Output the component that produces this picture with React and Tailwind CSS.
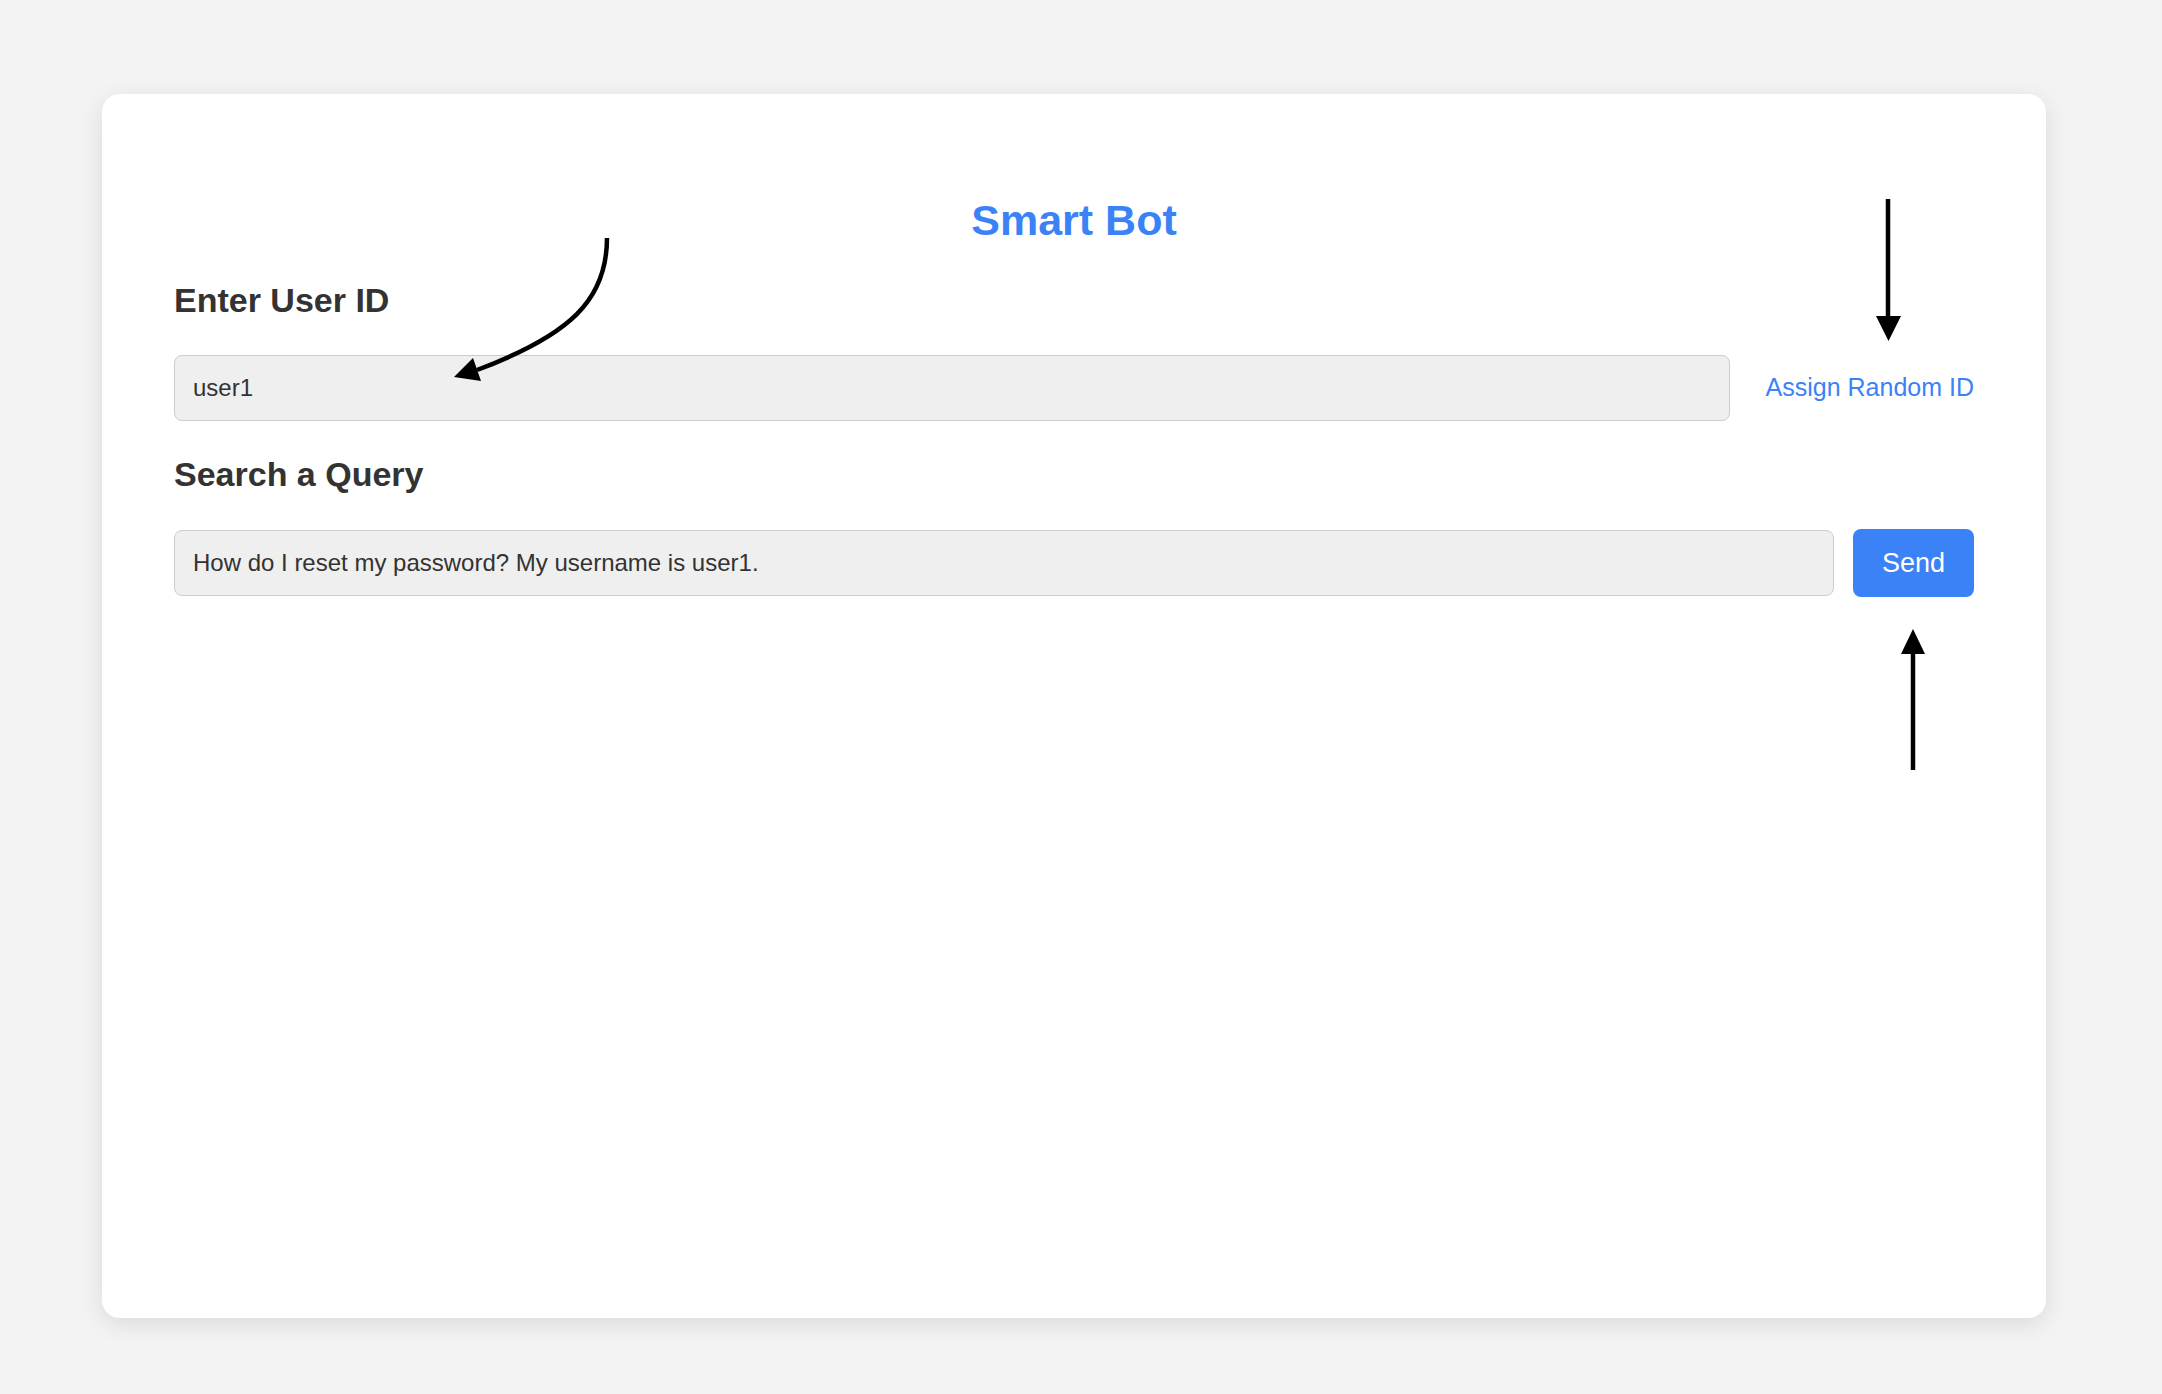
import { useState } from 'react';

export default function App() {
  const [userId, setUserId] = useState('user1');
  const [query, setQuery] = useState('How do I reset my password? My username is user1.');

  function assignRandom() {
    setUserId('user' + Math.floor(Math.random() * 1000));
  }

  return (
    <div
      className="min-h-[1394px] bg-[#f3f3f3] pl-[102px] pt-[94px]"
      style={{ fontFamily: '"Liberation Sans", Arial, sans-serif' }}
    >
      {/* ── CARD ───────────────────────────────── */}
      <div className="relative w-[1944px] h-[1224px] bg-white rounded-[18px] shadow-[0_6px_24px_rgba(0,0,0,0.1)] px-[72px] pt-[101px]">
        <h1 className="text-center text-[43px] leading-[50px] font-bold text-[#3b82f6] mb-[35px]">
          Smart Bot
        </h1>

        <h2 className="text-[34px] leading-[40px] font-bold text-[#333] mb-[35px]">
          Enter User ID
        </h2>
        <div className="flex items-center gap-[36px] mb-[33px]">
          <input
            value={userId}
            onChange={(e) => setUserId(e.target.value)}
            className="flex-1 h-[66px] bg-[#efefef] border border-[#cccccc] rounded-[8px] pl-[18px] text-[24px] text-[#333] outline-none"
          />
          <button
            onClick={assignRandom}
            className="text-[25px] text-[#3b82f6] whitespace-nowrap cursor-pointer"
          >
            Assign Random ID
          </button>
        </div>

        <h2 className="text-[34px] leading-[40px] font-bold text-[#333] mb-[35px]">
          Search a Query
        </h2>
        <div className="flex items-center gap-[19px]">
          <input
            value={query}
            onChange={(e) => setQuery(e.target.value)}
            className="flex-1 h-[66px] bg-[#efefef] border border-[#cccccc] rounded-[8px] pl-[18px] text-[24px] text-[#333] outline-none"
          />
          <button className="w-[121px] h-[68px] bg-[#3b82f6] rounded-[8px] text-white text-[27px] cursor-pointer">
            Send
          </button>
        </div>

        {/* annotation arrows */}
        <svg
          className="absolute inset-0 pointer-events-none"
          width="1944"
          height="1224"
          viewBox="0 0 1944 1224"
        >
          <path d="M505 144 C505 206 468 241 375 276" fill="none" stroke="#000" strokeWidth="4.5" />
          <polygon points="352,283 371,264 379,287" fill="#000" />

          <line x1="1786" y1="105" x2="1786" y2="226" stroke="#000" strokeWidth="4.5" />
          <polygon points="1774,222 1799,222 1786.5,247" fill="#000" />

          <line x1="1811" y1="556" x2="1811" y2="676" stroke="#000" strokeWidth="4.5" />
          <polygon points="1799,560 1823,560 1811,535" fill="#000" />
        </svg>
      </div>
    </div>
  );
}
